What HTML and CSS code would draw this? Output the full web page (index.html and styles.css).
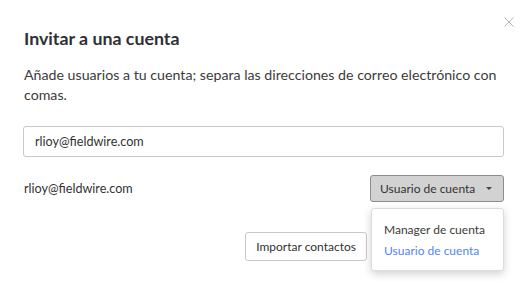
FILE: index.html
```html
<!DOCTYPE html>
<html lang="es">
<head>
    <meta charset="UTF-8">
    <title>Invitar a una cuenta</title>
    <link rel="stylesheet" href="styles.css">
</head>
<body>
    <div class="modal">
        <button class="close" type="button" aria-label="Cerrar">
            <svg width="10" height="10" viewBox="0 0 10 10">
                <path d="M0.5 0.5 L9.5 9.5 M9.5 0.5 L0.5 9.5" stroke="#b5b5b5" stroke-width="1" fill="none"/>
            </svg>
        </button>

        <h2 class="title">Invitar a una cuenta</h2>
        <p class="desc">Añade usuarios a tu cuenta; separa las direcciones de correo electrónico con comas.</p>

        <input class="emails" type="text" value="rlioy@fieldwire.com">

        <div class="user_row">
            <span class="user_email">rlioy@fieldwire.com</span>
            <div class="role_select">
                <button class="role_btn" type="button">
                    <span>Usuario de cuenta</span>
                    <span class="caret"></span>
                </button>
                <ul class="role_menu">
                    <li>Manager de cuenta</li>
                    <li class="active">Usuario de cuenta</li>
                </ul>
            </div>
        </div>

        <div class="footer">
            <button class="btn" type="button">Importar contactos</button>
            <button class="btn btn_primary" type="button" aria-label="Enviar"></button>
        </div>
    </div>
</body>
</html>
```

FILE: styles.css
```css
html,
body {
    margin: 0;
    padding: 0;
    background: #fff;
}

body {
    font-family: Lato, "Liberation Sans", sans-serif;
    color: #3b3b3b;
}

.modal {
    position: relative;
    width: 532px;
    height: 287px;
    box-sizing: border-box;
    padding: 26px 28px 0 23px;
}

.close {
    position: absolute;
    top: 17px;
    right: 18px;
    width: 10px;
    height: 10px;
    padding: 0;
    border: 0;
    background: none;
    display: flex;
}

.title {
    margin: 0 0 0 1px;
    font-size: 17.8px;
    font-weight: 700;
    line-height: 24px;
    color: #2e3036;
}

.desc {
    margin: 15px 0 0 1px;
    font-size: 14.2px;
    line-height: 20px;
    color: #3b3b3b;
}

.emails {
    display: block;
    width: 100%;
    height: 31px;
    box-sizing: border-box;
    margin-top: 21px;
    padding: 0 11px;
    border: 1px solid #c9c9c9;
    border-radius: 3px;
    font-family: inherit;
    font-size: 12.6px;
    color: #333;
}

.user_row {
    display: flex;
    align-items: center;
    justify-content: space-between;
    margin-top: 18px;
    padding-left: 1px;
}

.user_email {
    font-size: 12.6px;
    color: #333;
}

.role_select {
    position: relative;
}

.role_btn {
    display: flex;
    align-items: center;
    justify-content: space-between;
    width: 134px;
    height: 27px;
    box-sizing: border-box;
    padding: 0 11px 0 9px;
    border: 1px solid #8c8c8c;
    border-radius: 3px;
    background: #d2d2d2;
    font-family: inherit;
    font-size: 12px;
    color: #333;
}

.caret {
    width: 0;
    height: 0;
    border-left: 3px solid transparent;
    border-right: 3px solid transparent;
    border-top: 3px solid #444;
}

.role_menu {
    position: absolute;
    top: 33px;
    right: 0;
    z-index: 2;
    width: 133px;
    box-sizing: border-box;
    margin: 0;
    padding: 10px 0 9px 12px;
    list-style: none;
    background: #fff;
    border: 1px solid #dcdcdc;
    border-radius: 3px;
    box-shadow: 0 3px 8px rgba(0, 0, 0, 0.18);
    font-size: 12px;
    line-height: 21px;
    color: #3b3b3b;
}

.role_menu .active {
    color: #5484f2;
}

.footer {
    display: flex;
    justify-content: flex-end;
    gap: 5px;
    margin-top: 30px;
}

.btn {
    height: 29px;
    padding: 0 10px;
    border: 1px solid #c9c9c9;
    border-radius: 3px;
    background: #fff;
    font-family: inherit;
    font-size: 12px;
    color: #333;
}

.btn_primary {
    width: 132px;
    background: #1b3a8c;
    border-color: #1b3a8c;
}
```
